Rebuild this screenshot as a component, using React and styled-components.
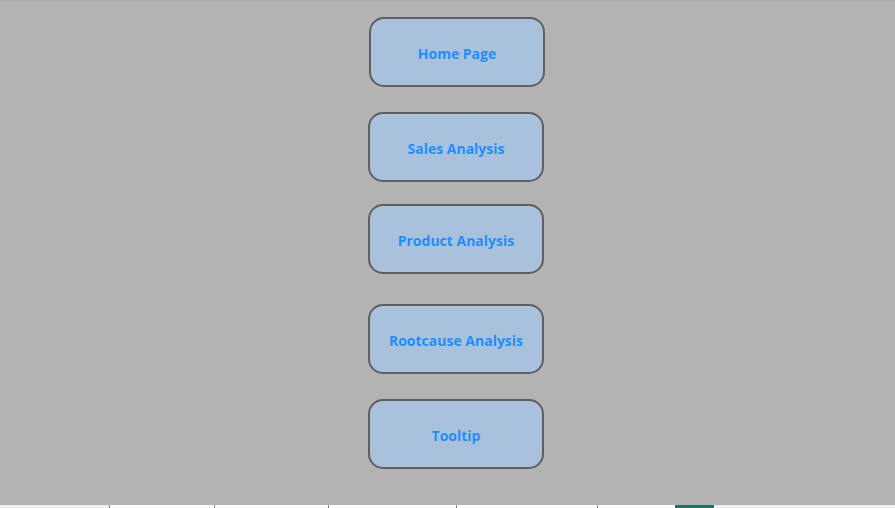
import React from 'react';
import styled, { createGlobalStyle } from 'styled-components';

const GlobalStyle = createGlobalStyle`
  html, body {
    margin: 0;
    padding: 0;
    background: #b3b3b3;
    overflow: hidden;
  }
`;

const Page = styled.div`
  width: 895px;
  height: 508px;
  display: flex;
  flex-direction: column;
  font-family: "Open Sans", "Noto Sans", sans-serif;
`;

const Canvas = styled.div`
  flex: 1;
  background: #b3b3b3;
  border-top: 1px solid #a9a9a9;
  display: flex;
  flex-direction: column;
  align-items: flex-start;
  padding-top: 16px;
  padding-left: 368px;
`;

const NavButton = styled.button`
  width: 176px;
  height: 70px;
  margin-top: ${({ gap }) => gap}px;
  margin-left: ${({ shift }) => shift || 0}px;
  box-sizing: border-box;
  background: #a9c1db;
  border: 2px solid #5f5f5f;
  border-radius: 15px;
  color: #1e8fff;
  font-family: inherit;
  font-size: 14px;
  font-weight: 700;
  padding: 2px 0 0;
  cursor: pointer;
`;

const TabStrip = styled.div`
  height: 3px;
  display: flex;
  background: #efefef;
  overflow: hidden;
`;

const Tab = styled.div`
  box-sizing: border-box;
  width: ${({ w }) => w}px;
  height: 3px;
  background: ${({ active }) => (active ? '#1a7660' : '#ffffff')};
  border-left: ${({ active }) => (active ? 'none' : '1px solid #8a8a8a')};
`;

const Spacer = styled.div`
  width: ${({ w }) => w}px;
`;

const pages = [
  { label: 'Home Page', gap: 0, shift: 1 },
  { label: 'Sales Analysis', gap: 25 },
  { label: 'Product Analysis', gap: 22 },
  { label: 'Rootcause Analysis', gap: 30 },
  { label: 'Tooltip', gap: 25 },
];

const tabs = [105, 114, 128, 141, 78];

function App() {
  return (
    <>
      <GlobalStyle />
      <Page>
        <Canvas>
          {pages.map((p) => (
            <NavButton key={p.label} gap={p.gap} shift={p.shift}>
              {p.label}
            </NavButton>
          ))}
        </Canvas>
        <TabStrip>
          <Spacer w={109} />
          {tabs.map((w, i) => (
            <Tab key={i} w={w} />
          ))}
          <Tab w={39} active />
        </TabStrip>
      </Page>
    </>
  );
}

export default App;
